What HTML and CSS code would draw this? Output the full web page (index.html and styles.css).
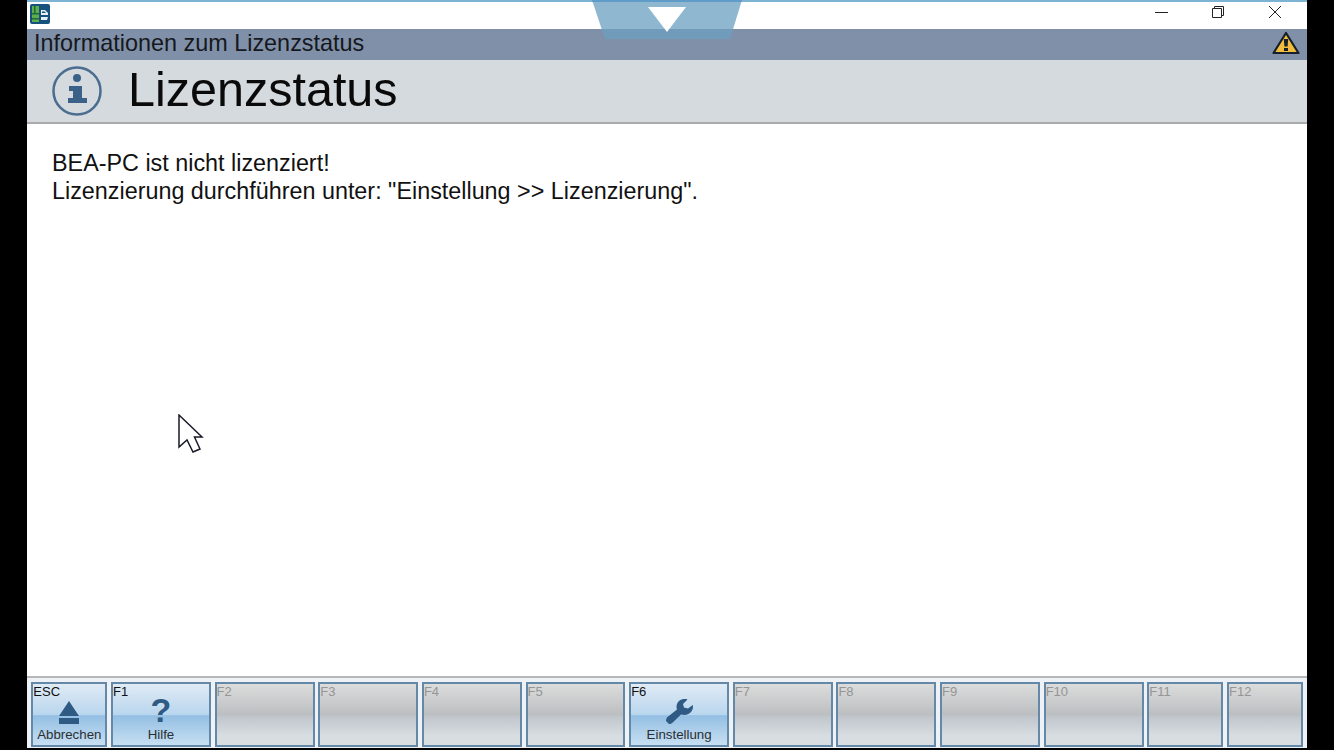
FILE: index.html
```html
<!DOCTYPE html>
<html lang="de">
<head>
  <meta charset="UTF-8">
  <title>Lizenzstatus</title>
  <link rel="stylesheet" href="styles.css">
</head>
<body>

<div class="app">
  <div class="titlebar">
    <svg class="app-icon" width="20" height="20" viewBox="0 0 20 20">
      <rect width="20" height="20" rx="2" fill="#17527f"/>
      <rect x="2" y="2" width="7" height="16" fill="#5fae4c"/>
      <rect x="4" y="2" width="1.500" height="7" fill="#1f6a3a"/>
      <rect x="2" y="9" width="7" height="1.500" fill="#1f6a3a"/>
      <rect x="2" y="14" width="7" height="1.500" fill="#1f6a3a"/>
      <path d="M11 6h4l3 3v2h-7zM11 13h7l-1 3h-6z" fill="#e8f0f6"/>
      <path d="M12 7.500h2.500l1.500 1.500h-4z" fill="#17527f"/>
    </svg>
    <div class="win-buttons">
      <svg width="14" height="14" viewBox="0 0 14 14"><path d="M1 7.500h13" stroke="#222" fill="none"/></svg>
      <svg width="14" height="14" viewBox="0 0 14 14"><path d="M1.500 3.500h9v9h-9zM3.500 3.500v-2h9v9h-2" stroke="#222" fill="none"/></svg>
      <svg width="14" height="14" viewBox="0 0 14 14"><path d="M1 1l12 12M13 1L1 13" stroke="#222" fill="none"/></svg>
    </div>
  </div>

  <div class="infobar">
    <span>Informationen zum Lizenzstatus</span>
    <svg width="28" height="24" viewBox="0 0 28 24">
      <path d="M14 2L26.500 22H1.500z" fill="#f2bd3c" stroke="#15202c" stroke-width="2.200" stroke-linejoin="round"/>
      <path d="M11.800 8h4.400l-.6 7.500h-3.200zM12 17h4v3h-4z" fill="#15202c"/>
    </svg>
  </div>

  <div class="heading">
    <svg width="52" height="52" viewBox="0 0 52 52">
      <circle cx="26" cy="26" r="23.500" fill="none" stroke="#4a6d90" stroke-width="2.500"/>
      <circle cx="26" cy="13" r="4" fill="#3a6288"/>
      <path d="M18 21h13v12h5v5H17v-5h5v-7h-4z" fill="#3a6288"/>
    </svg>
    <h1>Lizenzstatus</h1>
  </div>

  <div class="content">
    <p>BEA-PC ist nicht lizenziert!</p>
    <p>Lizenzierung durchführen unter: "Einstellung &gt;&gt; Lizenzierung".</p>
  </div>

  <div class="fkeys">
    <div class="fkey active">
      <span class="key">ESC</span>
      <svg width="22" height="23" viewBox="0 0 22 23"><path d="M11 0l10 15H1zM1 17h20v6H1z" fill="#2f5a84"/></svg>
      <span class="label">Abbrechen</span>
    </div>
    <div class="fkey active">
      <span class="key">F1</span>
      <span class="question">?</span>
      <span class="label">Hilfe</span>
    </div>
    <div class="fkey"><span class="key">F2</span></div>
    <div class="fkey"><span class="key">F3</span></div>
    <div class="fkey"><span class="key">F4</span></div>
    <div class="fkey"><span class="key">F5</span></div>
    <div class="fkey active">
      <span class="key">F6</span>
      <svg width="28" height="26" viewBox="0 0 28 26"><path d="M1 23l3 3c1 .2 2.500-.2 3.500-1.200L16 16.500c4 1 7.500.2 10-2.500 1.700-2 2.300-4.500 1.800-7L23 10.500l-4-1L18 6l4.500-4.500C20 .5 16.500 1 14 3c-2.500 2.300-3 5.500-2 8.500L2.500 19C1.500 20 1 21.500 1 23z" fill="#2f5a84"/></svg>
      <span class="label">Einstellung</span>
    </div>
    <div class="fkey"><span class="key">F7</span></div>
    <div class="fkey"><span class="key">F8</span></div>
    <div class="fkey"><span class="key">F9</span></div>
    <div class="fkey"><span class="key">F10</span></div>
    <div class="fkey"><span class="key">F11</span></div>
    <div class="fkey"><span class="key">F12</span></div>
  </div>

  <svg class="drop-tab" width="150" height="39" viewBox="0 0 150 39">
    <path d="M0 0h150l-12 39H13z" fill="#6b9fc0" fill-opacity=".75"/>
    <path d="M0 0h150v2H0z" fill="#5f9cc8"/>
    <path d="M56 7h38L75 32z" fill="#fff"/>
  </svg>

  <svg class="pointer" width="26" height="40" viewBox="0 0 26 40">
    <path d="M1 1l23 22h-7.500L22 35l-7 3-6-12-8 7z" fill="#fff" stroke="#1a1a2a" stroke-width="1.500"/>
  </svg>
</div>

</body>
</html>
```

FILE: styles.css
```css
* { box-sizing: border-box; }
html, body { margin: 0; height: 100%; background: #000; overflow: hidden; }
body { font-family: "Liberation Sans", Arial, sans-serif; color: #111; }

.app { position: relative; width: 1280px; height: 748px; margin-left: 27px; background: #fff; display: flex; flex-direction: column; }

.titlebar { height: 29px; flex: none; background: #fff; border-top: 2px solid #7db3d3; display: flex; align-items: flex-start; justify-content: space-between; padding: 2px 25px 0 3px; }
.app-icon { display: block; }
.win-buttons { display: flex; gap: 43px; margin-top: 1px; }
.win-buttons svg { display: block; }

.infobar { height: 31px; flex: none; background: #8090a8; display: flex; align-items: center; justify-content: space-between; padding: 0 7px 2px 7px; font-size: 23.400px; color: #15181d; }
.infobar svg { display: block; margin-top: -1px; }

.heading { height: 64px; flex: none; background: #d5dade; border-bottom: 2px solid #a9abad; display: flex; align-items: center; padding: 0 0 1px 24px; }
.heading svg { display: block; }
.heading h1 { margin: -3px 0 0 25px; font-size: 48.500px; font-weight: normal; color: #0a0a0a; }

.content { flex: 1; padding: 26px 25px; font-size: 23.350px; line-height: 27.500px; color: #111; }
.content p { margin: 0; }

.fkeys { height: 72px; flex: none; border-top: 2px solid #b5b7b8; background: #eef2f6; padding: 4px 4px 0 4.300px; display: grid; grid-template-columns: 76px repeat(10, 1fr) 76px 76px; column-gap: 3.700px; }

.fkey { position: relative; height: 65px; border: 2px solid #6388a8; background: linear-gradient(#dcdcdc, #bcbfc1 50%, #c0c6cb 54%, #d8dde2 85%); color: #959595; font-size: 13px; display: flex; flex-direction: column; align-items: center; justify-content: flex-end; }
.fkey.active { background: linear-gradient(#e0ebf5, #b9d6ee 50%, #94bfe3 52%, #c7dff2); color: #111; }
.fkey svg { display: block; }
.key { position: absolute; top: 0; left: 0; }
.label { font-size: 13.300px; line-height: 14px; margin: 4px 0 3px; color: #2a2f33; }
.question { font-size: 34px; font-weight: bold; line-height: 30px; margin-bottom: -1px; color: #2f5a84; }

.drop-tab { position: absolute; top: 0; left: 565px; }
.pointer { position: absolute; left: 151px; top: 414px; }
```
